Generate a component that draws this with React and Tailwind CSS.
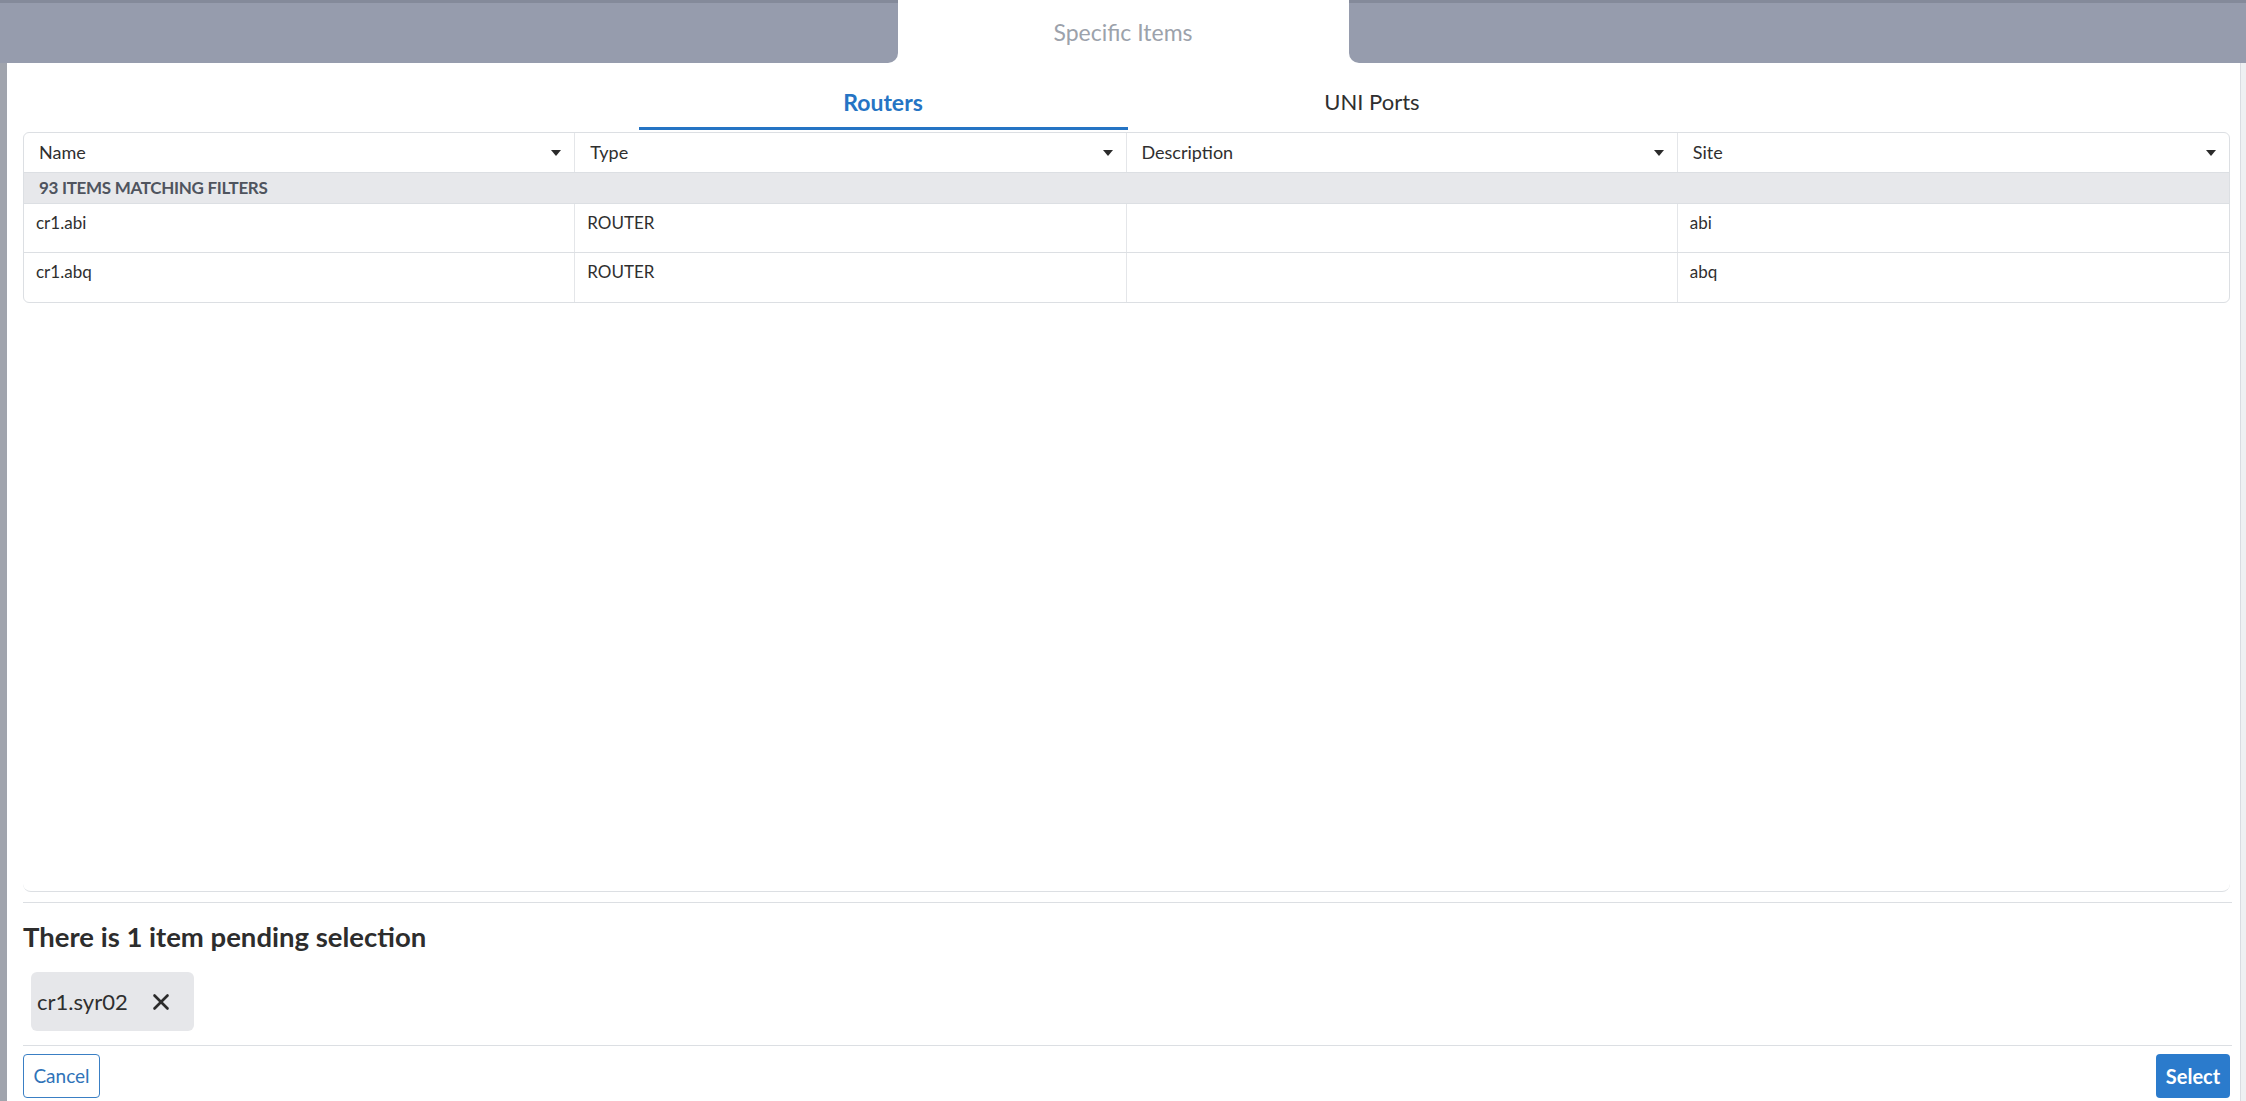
import { X } from "lucide-react";

const columns = ["Name", "Type", "Description", "Site"];
const rows = [
  { name: "cr1.abi", type: "ROUTER", description: "", site: "abi" },
  { name: "cr1.abq", type: "ROUTER", description: "", site: "abq" },
];

function Caret() {
  return (
    <svg width="10" height="6" viewBox="0 0 10 6" className="shrink-0">
      <path d="M0 0h10L5 6z" fill="#2b2b2b" />
    </svg>
  );
}

function App() {
  return (
    <div className="h-[1101px] w-full flex flex-col overflow-hidden bg-white font-['Lato','Noto_Sans',sans-serif] text-[#2f2f2f]">
      {/* top band with the dialog title tab */}
      <div className="h-[63px] flex bg-white shrink-0">
        <div className="flex-1 bg-[#969cad] border-t-[3px] border-[#848a9a] rounded-br-[10px]" />
        <div className="w-[451px] mt-[3px] bg-white rounded-t-[12px] flex items-center justify-center pb-[2px]">
          <span className="text-[23px] text-[#9ca2ab]">Specific Items</span>
        </div>
        <div className="flex-1 bg-[#969cad] border-t-[3px] border-[#848a9a] rounded-bl-[10px]" />
      </div>

      <div className="flex-1 flex">
        <div className="w-[7px] bg-[#a0a4ad]" />
        <div className="flex-1 flex flex-col pl-[16px] pr-[8px]">
          {/* tabs */}
          <div className="flex justify-center h-[67px] shrink-0">
            <div className="w-[489px] flex items-end justify-center pb-[12px] border-b-[3px] border-[#2574c4]">
              <span className="text-[23px] leading-[26px] font-bold text-[#2574c4]">Routers</span>
            </div>
            <div className="w-[489px] flex items-end justify-center pb-[12px] border-b-[3px] border-transparent">
              <span className="text-[22px] leading-[26px] text-[#2f2f2f]">UNI Ports</span>
            </div>
          </div>

          {/* table area */}
          <div className="mt-[2px] h-[760px] w-[2207px] border-b border-[#dcdfe3] rounded-b-[8px] shrink-0">
            <div className="border border-[#dcdfe3] rounded-[6px] text-[17px]">
              <div className="grid grid-cols-4 h-[40px] border-b border-[#dcdfe3]">
                {columns.map((c, i) => (
                  <div
                    key={c}
                    className={`flex items-center justify-between pl-[15px] pr-[13px] text-[18px] ${i < 3 ? "border-r border-[#e4e6e9]" : ""}`}
                  >
                    <span>{c}</span>
                    <Caret />
                  </div>
                ))}
              </div>
              <div className="h-[31px] bg-[#e7e8eb] border-b border-[#dcdfe3] flex items-center pl-[15px]">
                <span className="text-[17px] font-bold text-[#4f545e] tracking-[-0.3px]">93 ITEMS MATCHING FILTERS</span>
              </div>
              {rows.map((r, idx) => (
                <div
                  key={r.name}
                  className={`grid grid-cols-4 h-[49px] ${idx < rows.length - 1 ? "border-b border-[#dcdfe3]" : ""}`}
                >
                  {[r.name, r.type, r.description, r.site].map((v, i) => (
                    <div
                      key={i}
                      className={`pl-[12px] pt-[6px] ${i < 3 ? "border-r border-[#e4e6e9]" : ""}`}
                    >
                      {v}
                    </div>
                  ))}
                </div>
              ))}
            </div>
          </div>

          {/* pending selection */}
          <div className="mt-[10px] w-[2209px] border-t border-[#dcdfe3] pt-[17px] pb-[14px] border-b">
            <h2 className="text-[27.5px] leading-[34px] font-bold text-[#2d2d2d]">There is 1 item pending selection</h2>
            <div className="mt-[18px] ml-[8px] inline-flex items-center h-[59px] bg-[#e6e7ea] rounded-[6px] pl-[6px] pr-[20px] gap-[20px]">
              <span className="text-[22px]">cr1.syr02</span>
              <X size={26} strokeWidth={2.4} className="text-[#2b2b2b]" />
            </div>
          </div>

          {/* footer */}
          <div className="w-[2207px] flex justify-between items-center mt-[8px]">
            <button className="h-[44px] w-[77px] border-[1.5px] border-[#3a7fc4] rounded-[4px] text-[19px] text-[#2f73b8] bg-white">
              Cancel
            </button>
            <button className="h-[44px] w-[74px] rounded-[4px] bg-[#2b7bcc] text-[20px] font-bold text-white">
              Select
            </button>
          </div>
        </div>
        <div className="w-[6px] bg-[#eef0f2] border-l border-[#d9dce1]" />
      </div>
    </div>
  );
}

export default App;
